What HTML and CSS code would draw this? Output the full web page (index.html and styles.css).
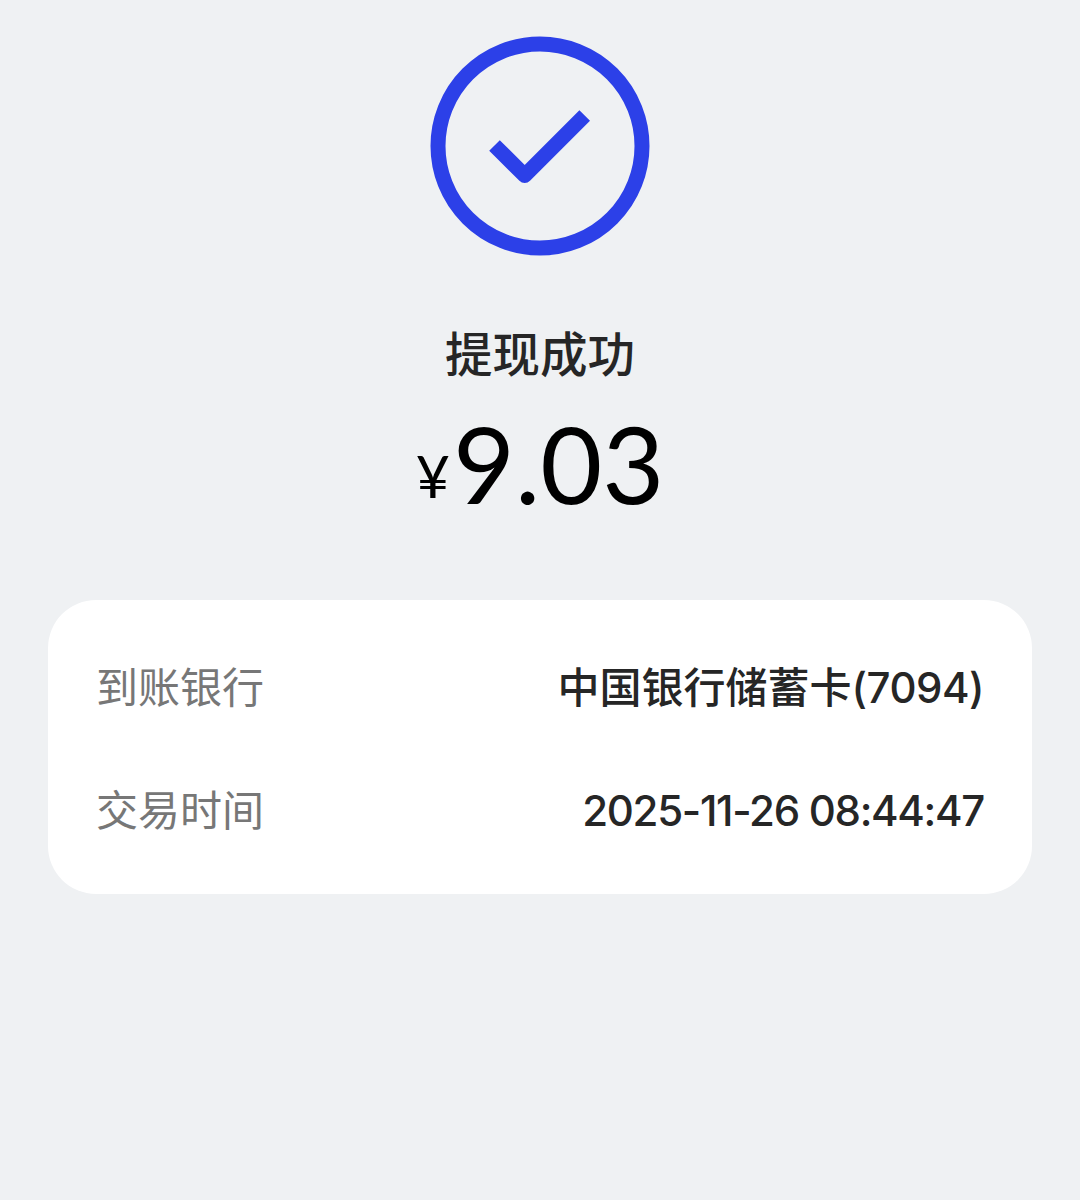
FILE: index.html
```html
<!DOCTYPE html>
<html lang="zh-CN">
<head>
    <meta charset="UTF-8">
    <meta name="viewport" content="width=device-width, initial-scale=1.0">
    <title>提现成功</title>
    <link rel="stylesheet" href="styles.css">
</head>
<body>
    <main class="result">
        <svg class="result-icon" viewBox="0 0 220 220" aria-hidden="true">
            <circle cx="110" cy="110" r="102" fill="none" stroke="#2c40e8" stroke-width="15"/>
            <path d="M64.5 109.5 L94.7 139.5 L154.7 79.5" fill="none" stroke="#2c40e8" stroke-width="15" stroke-linejoin="round"/>
        </svg>
        <h1 class="result-title">提现成功</h1>
        <div class="amount">
            <span class="currency">¥</span><span class="amount-value">9.03</span>
        </div>
    </main>

    <section class="card">
        <div class="row">
            <span class="label">到账银行</span>
            <span class="value">中国银行储蓄卡<span class="digits card-no">(7094)</span></span>
        </div>
        <div class="row">
            <span class="label">交易时间</span>
            <span class="value"><span class="digits time">2025-11-26 08:44:47</span></span>
        </div>
    </section>
</body>
</html>
```

FILE: styles.css
```css
* {
    box-sizing: border-box;
}

body {
    font-family: "Noto Sans CJK SC", sans-serif;
    background-color: #eff1f3;
    min-height: 100vh;
    margin: 0;
    padding: 36px 48px;
}

.result {
    display: flex;
    flex-direction: column;
    align-items: center;
}

.result-icon {
    width: 220px;
    height: 220px;
}

.result-title {
    margin: 61px 0 0;
    font-size: 47.5px;
    line-height: 70px;
    font-weight: 500;
    color: #262626;
}

.amount {
    display: flex;
    align-items: baseline;
    height: 130px;
    margin-top: 11px;
    font-family: Lato, sans-serif;
    color: #000;
    line-height: 130px;
}

.currency {
    font-size: 59px;
    margin-right: 3px;
    transform: translateY(-6px);
}

.amount-value {
    font-size: 107px;
}

.card {
    background-color: #fff;
    border-radius: 48px;
    height: 294px;
    margin-top: 72px;
    padding: 23px 48px;
}

.row {
    display: flex;
    align-items: center;
    justify-content: space-between;
    height: 123px;
    font-size: 42px;
    white-space: nowrap;
}

.label {
    color: #777;
}

.value {
    color: #262626;
    font-weight: 500;
}

.digits {
    font-family: Inter, sans-serif;
}

.card-no {
    letter-spacing: -0.5px;
}

.time {
    letter-spacing: -1.3px;
}
```
